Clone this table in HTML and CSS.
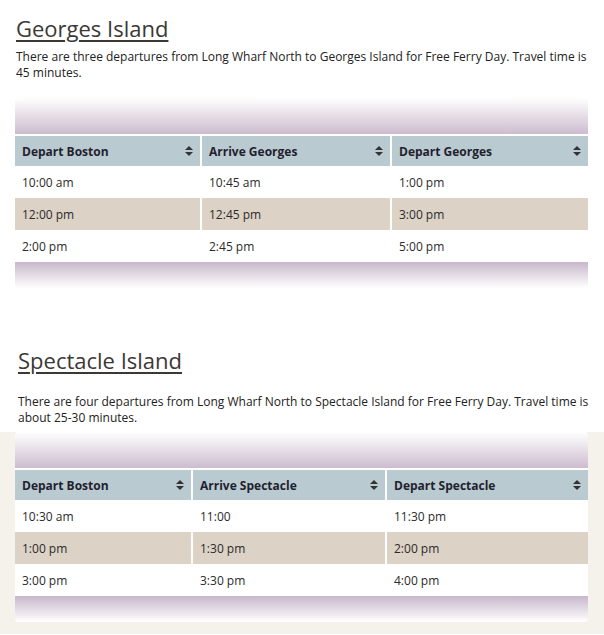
FILE: index.html
```html
<!DOCTYPE html>
<html>

	<head>
		<meta charset="UTF-8">
		<title>Free Ferry Day</title>
		<link rel="stylesheet" href="styles.css">
	</head>

	<body>

		<div class="island georges">
			<div class="intro">
				<h2><a href="#">Georges Island</a></h2>
				<p>There are three departures from Long Wharf North to Georges Island for Free Ferry Day. Travel time is 45 minutes.</p>
			</div>
			<div class="band">
				<div class="schedule">
					<div class="cap top"></div>
					<table>
						<colgroup>
							<col class="c1">
							<col class="c2">
							<col class="c3">
						</colgroup>
						<thead>
							<tr>
								<th>Depart Boston<span class="sort"></span></th>
								<th>Arrive Georges<span class="sort"></span></th>
								<th>Depart Georges<span class="sort"></span></th>
							</tr>
						</thead>
						<tbody>
							<tr><td>10:00 am</td><td>10:45 am</td><td>1:00 pm</td></tr>
							<tr><td>12:00 pm</td><td>12:45 pm</td><td>3:00 pm</td></tr>
							<tr><td>2:00 pm</td><td>2:45 pm</td><td>5:00 pm</td></tr>
						</tbody>
					</table>
					<div class="cap bottom"></div>
				</div>
			</div>
		</div>

		<div class="island spectacle">
			<div class="intro">
				<h2><a href="#">Spectacle Island</a></h2>
				<p>There are four departures from Long Wharf North to Spectacle Island for Free Ferry Day. Travel time is about 25-30 minutes.</p>
			</div>
			<div class="band">
				<div class="schedule">
					<div class="cap top"></div>
					<table>
						<colgroup>
							<col class="c1">
							<col class="c2">
							<col class="c3">
						</colgroup>
						<thead>
							<tr>
								<th>Depart Boston<span class="sort"></span></th>
								<th>Arrive Spectacle<span class="sort"></span></th>
								<th>Depart Spectacle<span class="sort"></span></th>
							</tr>
						</thead>
						<tbody>
							<tr><td>10:30 am</td><td>11:00</td><td>11:30 pm</td></tr>
							<tr><td>1:00 pm</td><td>1:30 pm</td><td>2:00 pm</td></tr>
							<tr><td>3:00 pm</td><td>3:30 pm</td><td>4:00 pm</td></tr>
						</tbody>
					</table>
					<div class="cap bottom"></div>
				</div>
			</div>
		</div>

	</body>

</html>
```

FILE: styles.css
```css
body {
	margin: 0;
	background-color: #fff;
	font-family: "Open Sans", "Liberation Sans", sans-serif;
	font-size: 12px;
	color: #222;
}

.intro {
	padding: 0 16px;
}

.intro h2 {
	margin: 0;
	font-size: 22px;
	font-weight: normal;
	line-height: 32px;
}

.intro h2 a {
	color: #3b3836;
	text-decoration: underline;
	text-decoration-thickness: 2px;
	text-underline-offset: 3px;
}

.intro p {
	margin: 0;
	line-height: 16px;
}

.georges .intro {
	padding-top: 12px;
}

.georges .intro h2 {
	margin-bottom: 5px;
}

.georges .band {
	padding: 17px 16px 0 15px;
}

.spectacle {
	margin-top: 56px;
}

.spectacle .intro {
	padding-left: 18px;
	padding-right: 12px;
}

.spectacle .intro h2 {
	margin-bottom: 18px;
}

.spectacle .band {
	margin-top: 6px;
	padding: 0 16px 12px 15px;
	background-color: #f5f2ec;
}

.schedule {
	background-color: #fff;
	border-radius: 4px;
	overflow: hidden;
}

.cap {
	height: 36px;
}

.cap.top {
	background: linear-gradient(to bottom, #fff, #cdbccf);
	border-bottom: 2px solid #fff;
}

.cap.bottom {
	height: 26px;
	background: linear-gradient(to bottom, #c8b7cb, #fff);
}

table {
	width: 100%;
	border-collapse: separate;
	border-spacing: 0;
	table-layout: fixed;
}

th,
td {
	text-align: left;
	padding: 0 7px;
}

th + th,
td + td {
	border-left: 2px solid #fff;
}

th {
	height: 30px;
	background-color: #bacad1;
	color: #231f2e;
	font-weight: bold;
	position: relative;
}

td {
	height: 32px;
	color: #2b2b2b;
}

tbody tr:nth-child(2) td {
	background-color: #dcd2c6;
}

.georges .c1 { width: 185px; }
.georges .c2 { width: 190px; }

.spectacle .c1 { width: 176px; }
.spectacle .c2 { width: 194px; }

.sort {
	position: absolute;
	right: 7px;
	top: 50%;
	margin-top: -5px;
	width: 0;
	height: 10px;
}

.sort::before,
.sort::after {
	content: "";
	position: absolute;
	right: 0;
	border-left: 4px solid transparent;
	border-right: 4px solid transparent;
}

.sort::before {
	top: 0;
	border-bottom: 4px solid #333;
}

.sort::after {
	bottom: 0;
	border-top: 4px solid #333;
}
```
